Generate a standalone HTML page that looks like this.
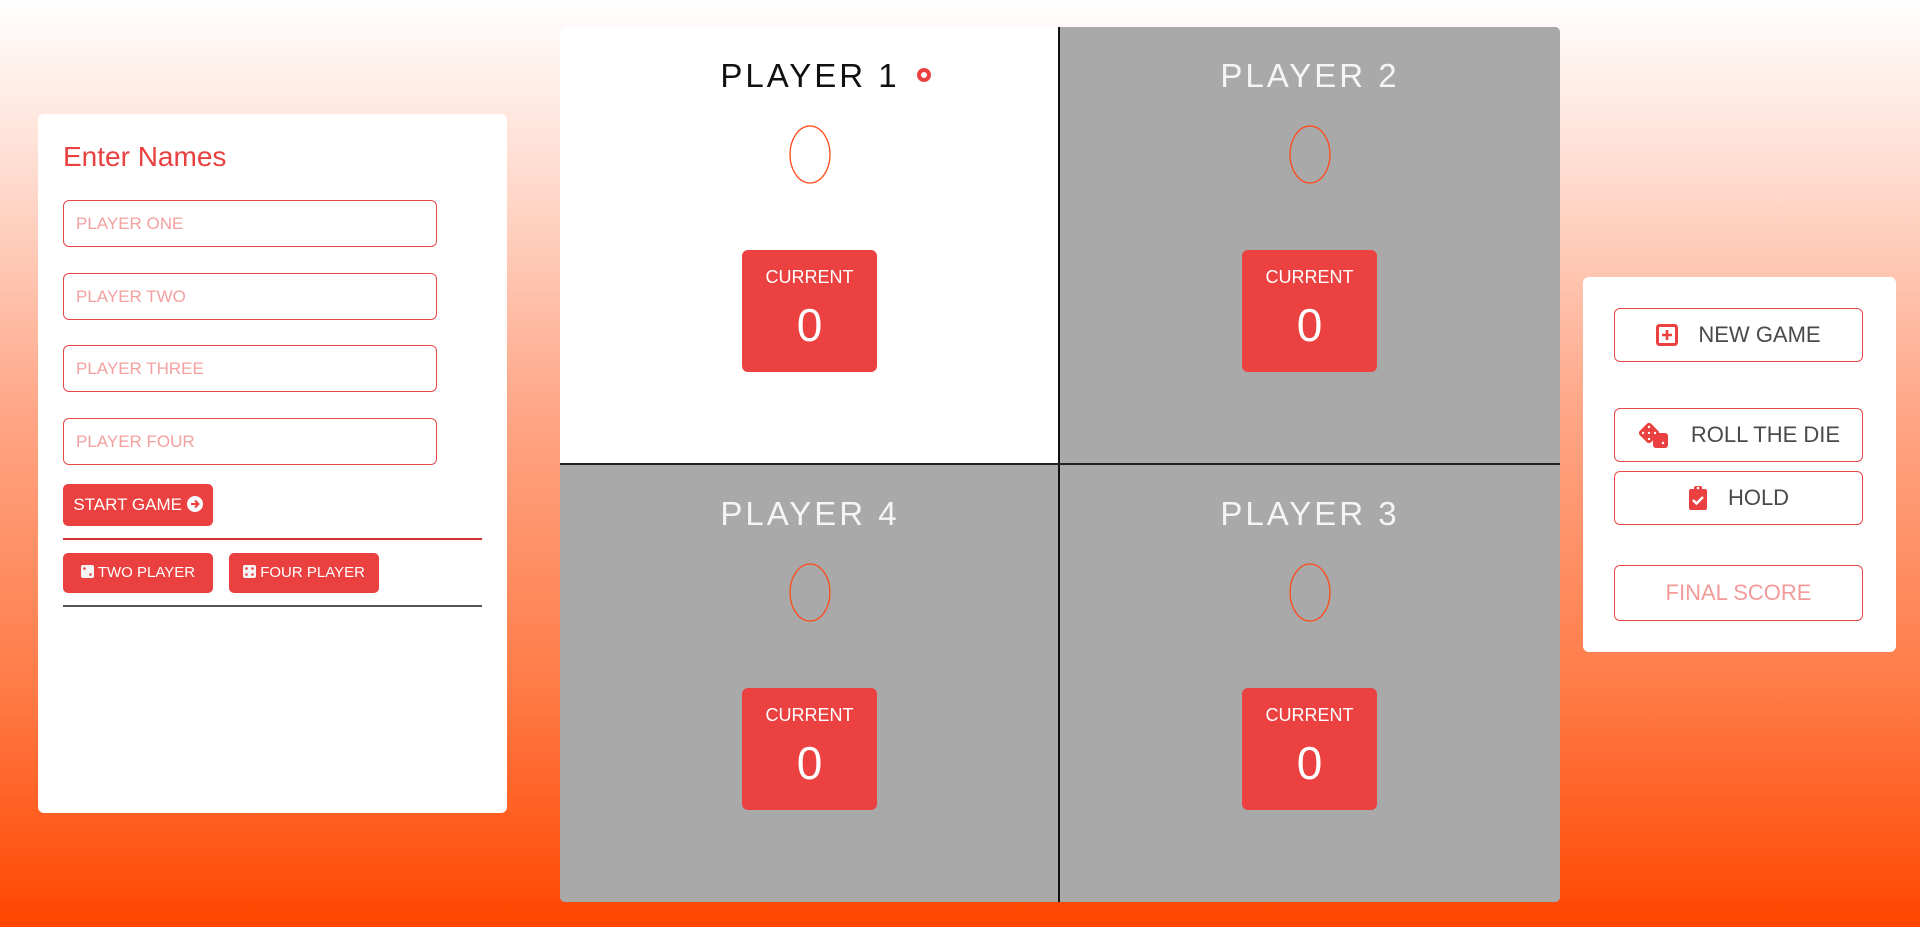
<!DOCTYPE html>
<html><head><meta charset="utf-8"><style>
*{box-sizing:border-box;margin:0;padding:0}
body{width:1920px;height:927px;overflow:hidden;position:relative;font-family:"Liberation Sans",sans-serif;background:linear-gradient(to bottom,#ffffff 0%,#ffd9cc 20%,#ffa585 45%,#ff7a45 75%,#ff4500 100%)}
.abs{position:absolute}
.panel{background:#fff;border-radius:6px}
.inp{position:absolute;left:63px;width:374px;height:47px;border:1px solid #e94848;border-radius:6px;color:#f3a0a0;font-size:17px;line-height:45px;padding-left:12px}
.rbtn{position:absolute;background:#ea4040;color:#fff;border-radius:5px;font-size:16px;text-align:center}
.board{left:560px;top:27px;width:1000px;height:875px;border-radius:5px;overflow:hidden;background:#aaa}
.cell{position:absolute;width:500px;height:437.5px;background:#a9a9a9}
.title{position:absolute;left:0;width:100%;top:29px;text-align:center;font-size:33px;letter-spacing:3px;color:#f5f5f5;font-weight:normal;line-height:40px}
.score{position:absolute;left:229px;top:98px;width:42px;height:59px}
.score span{position:absolute;left:0;top:0;width:100%;text-align:center;font-size:70px;line-height:59px;color:transparent}
.cur{position:absolute;left:182px;top:223px;width:135px;height:122px;background:#eb4141;border-radius:6px;color:#fff;text-align:center}
.cur .l{position:absolute;top:17px;width:100%;font-size:18px}
.cur .n{position:absolute;top:48px;width:100%;font-size:46px;font-weight:normal}
.sbtn{position:absolute;left:1614px;width:249px;border:1px solid #e94848;border-radius:6px;background:#fff;color:#4a4a4a;font-size:22px;text-align:center;display:flex;align-items:center;justify-content:center;gap:20px}
</style></head><body>

<div class="abs panel" style="left:38px;top:114px;width:469px;height:699px"></div>
<div class="abs" style="left:63px;top:141px;font-size:28px;color:#e94040">Enter Names</div>
<div class="inp" style="top:200px">PLAYER ONE</div>
<div class="inp" style="top:273px">PLAYER TWO</div>
<div class="inp" style="top:345px">PLAYER THREE</div>
<div class="inp" style="top:418px">PLAYER FOUR</div>
<div class="rbtn" style="left:63px;top:484px;width:150px;height:42px;line-height:42px;font-size:17px">START GAME <svg width="16" height="16" viewBox="0 0 16 16" style="vertical-align:-2px"><circle cx="8" cy="8" r="8" fill="#fff"/><path d="M4 8h7M8 4.5l3.5 3.5L8 11.5" stroke="#ea4040" stroke-width="2" fill="none"/></svg></div>
<div class="abs" style="left:63px;top:538px;width:419px;height:2px;background:#d43030"></div>
<div class="rbtn" style="left:63px;top:553px;width:150px;height:40px;line-height:40px;font-size:15px"><svg width="13" height="13" viewBox="0 0 13 13" style="vertical-align:-1px"><rect width="13" height="13" rx="2" fill="#f4f4f4"/><circle cx="3.5" cy="3.5" r="1.3" fill="#ea4040"/><circle cx="9.5" cy="9.5" r="1.3" fill="#ea4040"/></svg> TWO PLAYER</div>
<div class="rbtn" style="left:229px;top:553px;width:150px;height:40px;line-height:40px;font-size:15px"><svg width="13" height="13" viewBox="0 0 13 13" style="vertical-align:-1px"><rect width="13" height="13" rx="2" fill="#f4f4f4"/><circle cx="3.5" cy="3.5" r="1.3" fill="#ea4040"/><circle cx="9.5" cy="9.5" r="1.3" fill="#ea4040"/><circle cx="9.5" cy="3.5" r="1.3" fill="#ea4040"/><circle cx="3.5" cy="9.5" r="1.3" fill="#ea4040"/></svg> FOUR PLAYER</div>
<div class="abs" style="left:63px;top:605px;width:419px;height:2px;background:#555"></div>

<div class="abs board">
 <div class="cell" style="left:0;top:0;background:#fff">
  <div class="title" style="color:#111">PLAYER 1</div>
  <svg class="abs" width="16" height="16" viewBox="0 0 16 16" style="left:356px;top:40px"><circle cx="8" cy="8" r="5" stroke="#ea4040" stroke-width="4" fill="none"/></svg>
  <div class="score"><svg width="42" height="59" viewBox="0 0 42 59"><ellipse cx="21" cy="29.5" rx="20" ry="28.5" stroke="#ff4a1a" stroke-width="1.3" fill="none"/></svg><span>0</span></div>
  <div class="cur"><div class="l">CURRENT</div><div class="n">0</div></div>
 </div>
 <div class="cell" style="left:500px;top:0">
  <div class="title">PLAYER 2</div>
  <div class="score"><svg width="42" height="59" viewBox="0 0 42 59"><ellipse cx="21" cy="29.5" rx="20" ry="28.5" stroke="#ff4a1a" stroke-width="1.3" fill="none"/></svg><span>0</span></div>
  <div class="cur"><div class="l">CURRENT</div><div class="n">0</div></div>
 </div>
 <div class="cell" style="left:0;top:437.5px">
  <div class="title">PLAYER 4</div>
  <div class="score"><svg width="42" height="59" viewBox="0 0 42 59"><ellipse cx="21" cy="29.5" rx="20" ry="28.5" stroke="#ff4a1a" stroke-width="1.3" fill="none"/></svg><span>0</span></div>
  <div class="cur"><div class="l">CURRENT</div><div class="n">0</div></div>
 </div>
 <div class="cell" style="left:500px;top:437.5px">
  <div class="title">PLAYER 3</div>
  <div class="score"><svg width="42" height="59" viewBox="0 0 42 59"><ellipse cx="21" cy="29.5" rx="20" ry="28.5" stroke="#ff4a1a" stroke-width="1.3" fill="none"/></svg><span>0</span></div>
  <div class="cur"><div class="l">CURRENT</div><div class="n">0</div></div>
 </div>
 <div class="abs" style="left:498px;top:0;width:2px;height:875px;background:#111"></div>
 <div class="abs" style="left:0;top:436px;width:1000px;height:2px;background:#222"></div>
</div>

<div class="abs panel" style="left:1583px;top:277px;width:313px;height:375px"></div>
<div class="sbtn" style="top:308px;height:54px"><svg width="22" height="22" viewBox="0 0 22 22"><rect x="1.5" y="1.5" width="19" height="19" rx="2" stroke="#ea4040" stroke-width="3" fill="none"/><path d="M11 6v10M6 11h10" stroke="#ea4040" stroke-width="2.6"/></svg><span>NEW GAME</span></div>
<div class="sbtn" style="top:408px;height:54px"><svg width="34" height="28" viewBox="0 0 34 28"><rect x="4" y="4" width="16" height="16" rx="3" transform="rotate(45 12 12)" fill="#ea4040"/><rect x="16" y="12" width="15" height="15" rx="3" fill="#ea4040"/><circle cx="12" cy="6" r="1.2" fill="#fff"/><circle cx="12" cy="12" r="1.2" fill="#fff"/><circle cx="12" cy="18" r="1.2" fill="#fff"/><circle cx="6" cy="12" r="1.2" fill="#fff"/><circle cx="18" cy="12" r="1.2" fill="#fff"/><circle cx="26" cy="22" r="1.2" fill="#fff"/></svg><span>ROLL THE DIE</span></div>
<div class="sbtn" style="top:471px;height:54px"><svg width="20" height="26" viewBox="0 0 20 26"><rect x="1" y="4" width="18" height="21" rx="2" fill="#ea4040"/><rect x="6" y="1" width="8" height="5" rx="2" fill="#ea4040"/><circle cx="10" cy="3" r="1.3" fill="#fff"/><path d="M5 15l3.5 3.5L15 12" stroke="#fff" stroke-width="2.5" fill="none"/></svg><span>HOLD</span></div>
<div class="sbtn" style="top:565px;height:56px;color:#f39a9a">FINAL SCORE</div>
</body></html>
